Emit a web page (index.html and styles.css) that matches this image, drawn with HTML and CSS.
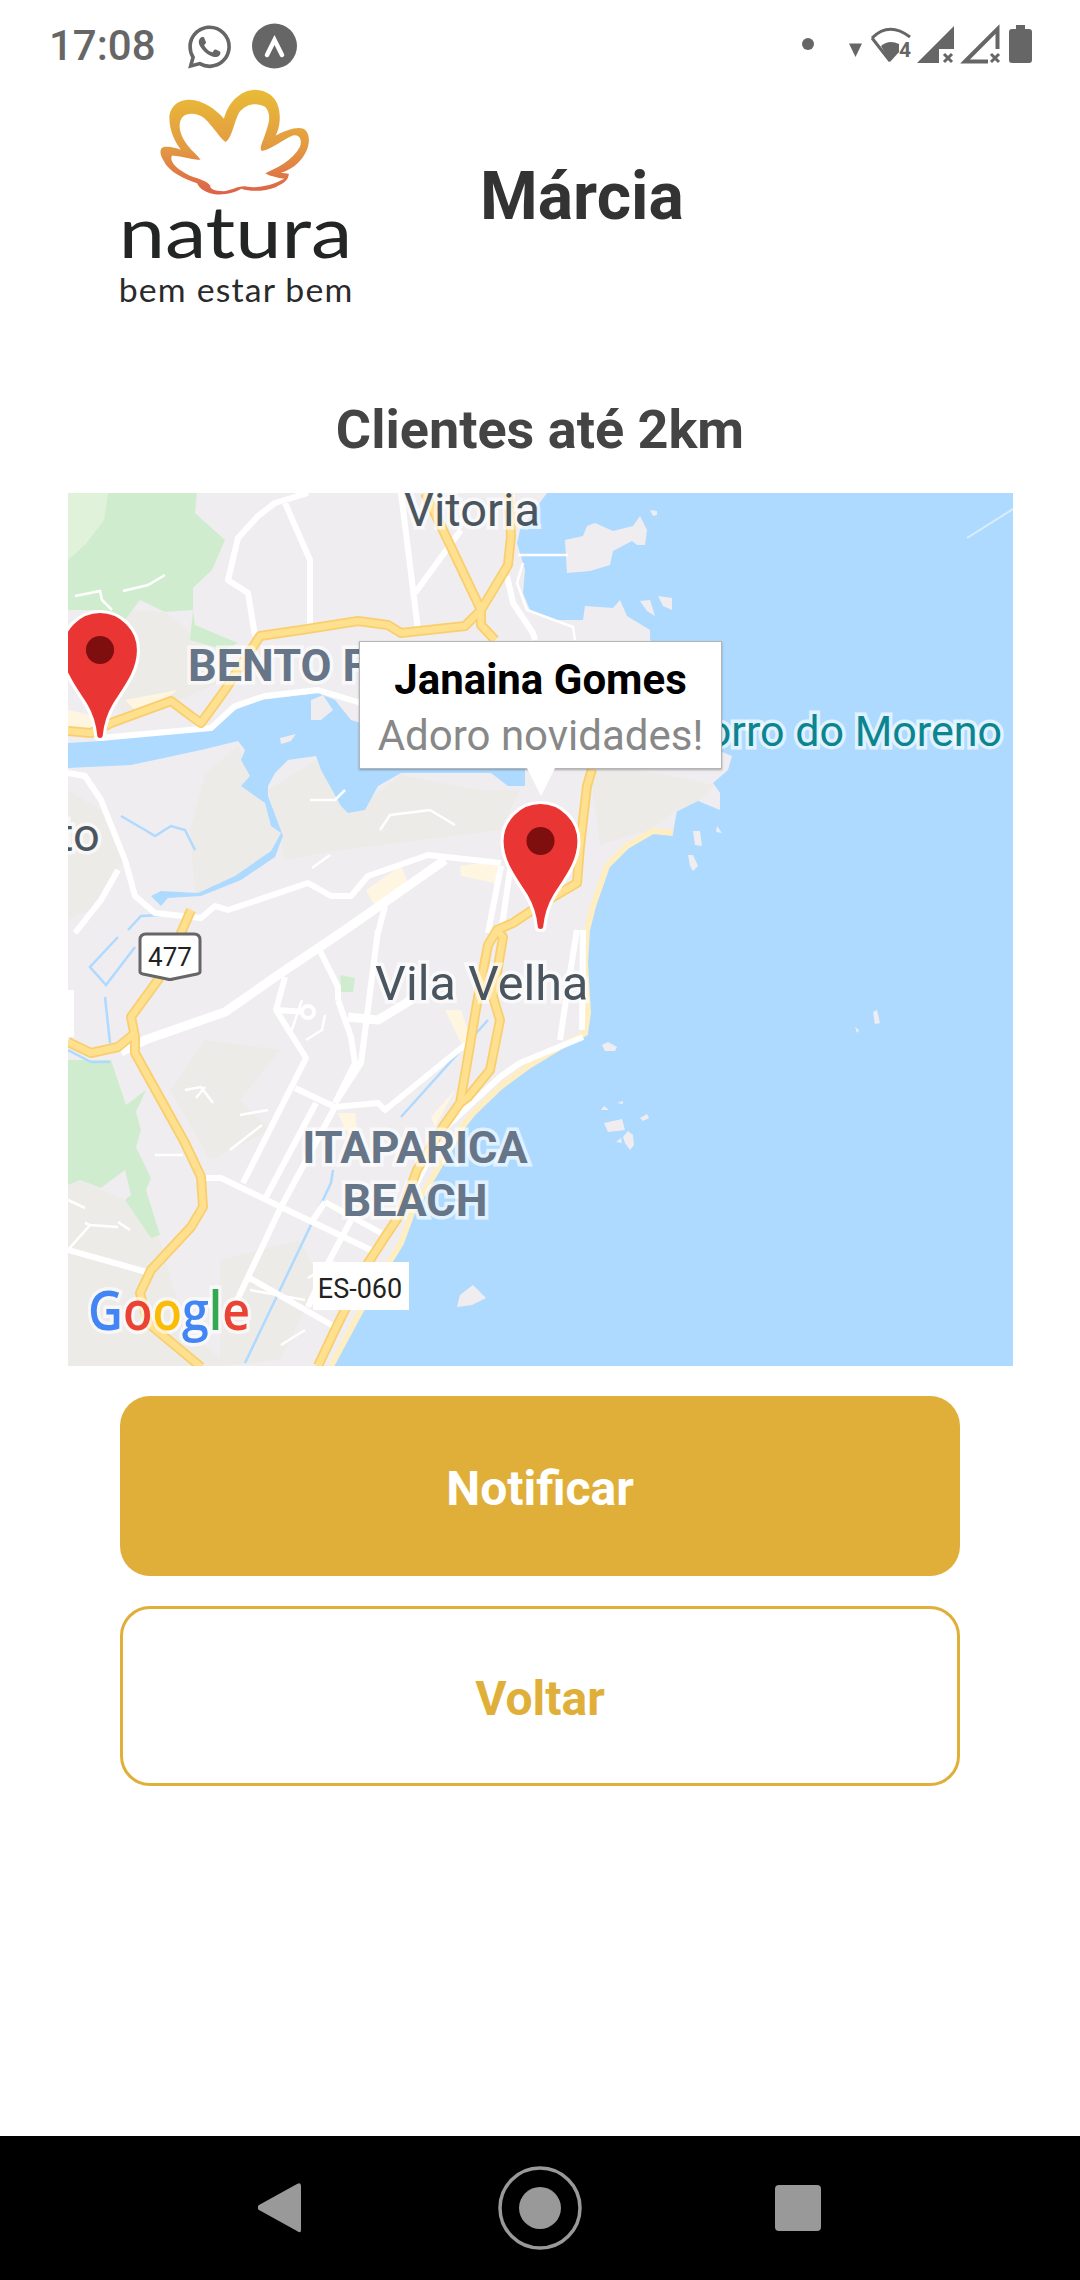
FILE: index.html
```html
<!DOCTYPE html>
<html lang="pt">
<head>
<meta charset="utf-8">
<title>Clientes até 2km</title>
<link rel="stylesheet" href="styles.css">
</head>
<body>
<div class="page">
  <div class="status">
    <span class="time">17:08</span>
    <svg class="wa" viewBox="0 0 24 24"><path class="sgrey" d="M17.472 14.382c-.297-.149-1.758-.867-2.03-.967-.273-.099-.471-.148-.67.15-.197.297-.767.966-.94 1.164-.173.199-.347.223-.644.075-.297-.15-1.255-.463-2.39-1.475-.883-.788-1.48-1.761-1.653-2.059-.173-.297-.018-.458.13-.606.134-.133.298-.347.446-.52.149-.174.198-.298.298-.497.099-.198.05-.371-.025-.52-.075-.149-.669-1.612-.916-2.207-.242-.579-.487-.5-.669-.51-.173-.008-.371-.01-.57-.01-.198 0-.52.074-.792.372-.272.297-1.04 1.016-1.04 2.479 0 1.462 1.065 2.875 1.213 3.074.149.198 2.096 3.2 5.077 4.487.709.306 1.262.489 1.694.625.712.227 1.36.195 1.871.118.571-.085 1.758-.719 2.006-1.413.248-.694.248-1.289.173-1.413-.074-.124-.272-.198-.57-.347m-5.421 7.403h-.004a9.87 9.87 0 01-5.031-1.378l-.361-.214-3.741.982.998-3.648-.235-.374a9.86 9.86 0 01-1.51-5.26c.001-5.45 4.436-9.884 9.888-9.884 2.64 0 5.122 1.03 6.988 2.898a9.825 9.825 0 012.893 6.994c-.003 5.45-4.437 9.884-9.885 9.884m8.413-18.297A11.815 11.815 0 0012.05 0C5.495 0 .16 5.335.157 11.892c0 2.096.547 4.142 1.588 5.945L.057 24l6.305-1.654a11.882 11.882 0 005.683 1.448h.005c6.554 0 11.89-5.335 11.893-11.893a11.821 11.821 0 00-3.48-8.413Z"/></svg>
    <svg class="expo" viewBox="252 23 45 46">
      <circle class="sgrey" cx="274.5" cy="46" r="22.5"/>
      <path class="caret" d="M267 55L274.500 40L282 55"/>
    </svg>
    <svg class="sysicons" viewBox="800 20 240 50">
      <circle class="sgrey" cx="808" cy="44" r="6"/>
      <path class="sgrey" d="M849 43.500H862L855.500 57Z"/>
      <path class="wifi-arc" d="M872 38Q889 21 910 37M872 38L890 61"/>
      <path class="sgrey" d="M881 46Q889 39 899 44V52L890 62Z"/>
      <text class="wifi4" x="899" y="57">4</text>
      <path class="sgrey" d="M917 63L954 26V63Z"/>
      <rect class="swhite" x="939" y="49" width="15" height="14"/>
      <path class="xmark" d="M944 54L952 62M952 54L944 62"/>
      <path class="sig-out" d="M965 61.500L997.500 29V61.500Z"/>
      <rect class="swhite" x="988" y="49" width="14" height="15"/>
      <path class="xmark" d="M991 54L999 62M999 54L991 62"/>
      <rect class="sgrey" x="1016" y="25" width="9" height="6"/>
      <rect class="sgrey" x="1009" y="29" width="23" height="34" rx="3"/>
    </svg>
  </div>

  <header class="header">
    <svg class="logo" viewBox="340 260 690 650" preserveAspectRatio="none">
      <defs>
        <linearGradient id="petal" x1="0" y1="0" x2="0" y2="1">
          <stop offset="0" stop-color="#E8BC36"/>
          <stop offset=".55" stop-color="#E39A42"/>
          <stop offset="1" stop-color="#DD6148"/>
        </linearGradient>
      </defs>
      <path class="flower" d="M650 355C665 300 700 270 740 268C785 270 812 300 812 350C812 375 806 395 800 405C830 390 860 378 880 385C900 395 902 430 885 460C870 490 840 510 815 517L838 520C838 540 820 550 800 560C770 572 730 575 700 565C680 578 640 588 610 578C595 572 580 565 572 548C535 535 490 515 475 480C463 460 463 445 475 440C490 437 510 442 525 448C505 420 490 385 492 345C497 315 520 298 550 298C590 300 625 325 650 355ZM655 425C640 415 620 380 595 355C575 338 545 335 530 350C515 370 520 400 545 435C560 455 575 465 582 478C560 478 530 468 500 465C490 480 510 505 550 525C575 535 600 540 610 555C610 565 620 572 650 572C675 570 690 555 715 558C745 565 790 555 825 535C800 530 780 525 770 518C800 505 850 480 870 440C878 420 870 400 850 405C825 415 790 445 760 452C755 445 755 440 765 415C780 370 790 345 770 320C745 305 715 310 695 335C680 360 675 410 655 425Z"/>
      <text class="natura" x="345" y="772" textLength="677" lengthAdjust="spacingAndGlyphs">natura</text>
      <text class="tagline" x="345" y="903" textLength="677" lengthAdjust="spacing">bem estar bem</text>
    </svg>
    <h1 class="name">Márcia</h1>
  </header>

  <h2 class="subtitle">Clientes até 2km</h2>

  <div class="map">
    <svg class="mapsvg" viewBox="68 493 945 873">
      <defs>
        <g id="hw">
          <path d="M68 731L91 733L111 723L171 701L191 716L201 723L225 690L260 636L301 630L358 621L388 625L401 633L465 626L481 610L508 565L511 536L508 493"/>
          <path d="M425 493L441 526L481 610L481 625L495 640"/>
          <path d="M592 769L587 786L580 846L577 883L543 903L513 923L497 930L488 945L477 1003L467 1063L460 1103L443 1127L417 1170L401 1213L385 1237L368 1263L335 1330L318 1366"/>
          <path d="M497 930L503 937L493 997L500 1020L490 1070L468 1097L460 1103"/>
          <path d="M191 910L181 933L158 980L131 1017L135 1037L135 1053L185 1143L201 1177L203 1207L191 1227L151 1270L140 1293L148 1323L201 1367"/>
          <path d="M68 1042L91 1053L118 1047L135 1033"/>
        </g>
      </defs>
      <rect class="water" x="68" y="493" width="945" height="873"/>
      <path class="land" d="M68 493L547 493L520 530L517 543L525 570L523 593L530 610L553 620L583 620L585 606L613 608L620 600L627 616L650 630L650 640L700 700L722 752L732 756L728 770L713 783L720 793L720 810L703 803L687 796L677 810L673 833L653 831L627 846L607 866L593 906L587 930L585 963L588 1013L585 1033L560 1047L527 1067L500 1087L473 1113L460 1130L437 1170L413 1210L401 1243L368 1297L331 1366L68 1366Z"/>
      <path class="land" d="M565 540L583 536L587 526L595 523L613 531L633 526L640 516L647 530L645 545L637 545L632 541L613 551L610 565L590 571L567 573Z"/>
      <path class="land" d="M650 510L657 511L657 515L653 516ZM640 601L650 600L655 616L647 611ZM658 596L672 598L672 610L663 606ZM693 831L700 831L702 846L695 845ZM717 826L722 833L716 832ZM688 855L693 855L698 866L693 871L690 866ZM602 1045L608 1042L617 1047L615 1051L605 1051ZM601 1110L604 1106L609 1110ZM617 1103L623 1101L623 1104ZM640 1118L647 1114L649 1118L643 1121ZM604 1123L622 1119L625 1130L608 1132ZM623 1137L628 1131L633 1135L634 1145L630 1150L625 1143ZM616 1142L621 1138L622 1143ZM873 1012L877 1010L880 1023L875 1024ZM855 1027L859 1030L857 1033ZM457 1307L460 1295L473 1285L486 1298L472 1305Z"/>
      <path class="seaLine" d="M967 538L1013 509"/>

      <path class="terrain" d="M268 790L316 760L350 815L400 775L480 790L520 790L500 830L340 850L285 860Z"/>
      <path class="terrain" d="M205 775L238 745L262 800L280 835L270 860L230 880L195 895L190 830Z"/>
      <path class="terrain" d="M590 770L640 770L715 785L700 800L670 815L650 830L600 845Z"/>
      <path class="terrain" d="M68 1185L80 1180L125 1200L160 1240L185 1330L230 1366L68 1366Z"/>
      <path class="terrain" d="M205 1040L280 1050L240 1100L270 1130L210 1160L170 1090Z"/>
      <path class="terrain" d="M125 610L165 612L200 640L225 680L180 700L125 720L100 650Z"/>
      <path class="terrain" d="M68 790L100 810L125 860L90 910L68 920Z"/>
      <path class="terrain" d="M220 1260L300 1240L320 1280L280 1360L220 1366Z"/>

      <path class="park" d="M68 493L197 493L195 513L225 540L212 570L193 588L193 610L165 612L140 600L125 620L100 610L68 610Z"/>
      <path class="park-light" d="M68 493L108 493L104 520L85 545L68 560Z"/>
      <path class="park" d="M193 610L195 625L238 643L225 650L190 640Z"/>
      <path class="park" d="M68 1060L111 1060L126 1105L146 1090L136 1112L141 1130L136 1147L151 1178L146 1190L160 1235L151 1238L125 1200L131 1195L125 1170L101 1188L80 1180L68 1185Z"/>
      <path class="park" d="M340 975L355 978L353 992L341 992Z"/>

      <path class="water" d="M68 743L101 741L168 730L211 731L235 710L261 700L318 693L335 700L351 720L361 723L430 700L525 720L525 786L508 786L491 773L401 773L378 786L365 810L348 813L341 806L321 770L316 756L288 760L275 773L268 786L268 796L283 836L275 857L241 880L201 896L168 898L161 906L151 896L161 891L198 893L235 876L271 851L281 833L271 826L265 803L241 786L250 776L241 760L245 750L238 741L201 750L131 765L68 768Z"/>
      <path class="land" d="M311 700L323 695L333 710L321 720L311 720ZM280 738L296 734L291 741L281 744Z"/>
      <path class="streamline" d="M121 816L145 830L155 836L171 826L185 830L195 850M128 930L141 916L163 915M118 937L90 967L106 985L135 947M105 997L110 1043M488 1020L401 1117M333 1170L331 1183L245 1363M68 1050L91 1062L110 1062"/>

      <path class="cream" d="M445 1010L461 1010L471 1040L461 1043ZM431 1117L455 1090L435 1127ZM338 1113L355 1113L358 1137L345 1130ZM366 890L401 866L408 883L375 906ZM460 866L501 860L495 883L461 876ZM68 710L90 715L95 730L68 728ZM125 700L178 690L140 715Z"/>
      <path class="beach" d="M673 833L653 831L627 846L607 866L593 906L587 930L585 963L588 1013L585 1033L560 1047L527 1067L500 1087L473 1113L460 1130L437 1170L413 1210L401 1243L368 1297L331 1366"/>

      <g class="road">
        <path d="M308 493L275 503L258 516L238 538L228 580L248 593L255 636M285 503L310 560L310 626M401 493L418 630M461 530L415 593"/>
        <path d="M100 738L211 728L235 706L265 696L318 690L338 696L361 703"/>
        <path d="M507 576L513 603L533 633L535 640"/>
        <path d="M68 773L85 776L101 800L125 860L135 896L155 913L201 918L215 906L228 910L308 883L331 896L351 896L368 876L428 855L501 863M118 870L101 900L75 933"/>
        <path d="M501 866L488 933M511 863L501 933M385 906L378 933"/>
        <path d="M338 1000L351 1037L355 1063L335 1103M378 930L361 1063L335 1103M285 977L276 1010L306 1058L243 1183M295 1088L335 1107L378 1103L385 1110L471 1040M316 1103L266 1197M205 1178L221 1178L281 1207L375 1252M335 1107L281 1207L231 1313M68 1250L150 1273M248 1277L335 1327M325 1202L311 1223M325 1202L381 1233M351 1220L328 1263L308 1307M318 947L338 987L338 1000"/>
        <path d="M577 930L570 973L560 1040M583 930L582 1030M500 1077L520 1063L583 1037M500 1077L443 1130L400 1217"/>
        <path d="M276 1010L308 1012"/>
        <circle class="rb" cx="308" cy="1012" r="6"/>
      </g>
      <path class="road-thick" d="M445 860L345 930L281 973L225 1012L145 1040L121 1052M348 1017L378 1020L411 1000"/>
      <path class="road-thin" d="M75 596L100 591L102 600L112 610M123 591L148 585L165 575M518 555L568 555M523 563L517 583L527 610L573 627L575 640M185 1090L201 1087L213 1103M196 1098L205 1087M68 1200L85 1208M85 1223L90 1225L68 1250M90 1225L118 1227M118 1222L130 1230M155 1155L183 1155M230 1150L262 1125M240 1115L268 1110M290 1035L302 1000M306 1040L322 1030L325 1015M308 1278L335 1262M250 1290L305 1300M281 1345L305 1330M312 868L330 855M310 800L335 800L345 790M380 830L390 815L430 810L455 825"/>
      <use href="#hw" class="hw-out"/>
      <use href="#hw" class="hw-in"/>

      <rect class="whitebox" x="68" y="990" width="6" height="47"/>

      <text class="lbl lbl-city" x="404" y="526">Vitoria</text>
      <text class="lbl lbl-city" x="58" y="851">to</text>
      <text class="lbl lbl-city lbl-big" x="375" y="1000">Vila Velha</text>
      <text class="lbl lbl-hood" x="188" y="681">BENTO F</text>
      <text class="lbl lbl-hood lbl-mid" x="415" y="1163">ITAPARICA</text>
      <text class="lbl lbl-hood lbl-mid" x="415" y="1216">BEACH</text>
      <text class="lbl lbl-poi" x="1002" y="746">Morro do Moreno</text>

      <path class="shield" d="M146 934H194Q200 934 200 940V972Q200 973 197 974L173 979Q170 980 167 979L143 974Q140 973 140 972V940Q140 934 146 934Z"/>
      <text class="shield-text" x="170" y="966">477</text>
      <rect class="whitebox" x="313" y="1262" width="96" height="48"/>
      <text class="es" x="360" y="1298">ES-060</text>

      <text class="google" x="88" y="1330" textLength="162" lengthAdjust="spacingAndGlyphs"><tspan class="g-b">G</tspan><tspan class="g-r">o</tspan><tspan class="g-y">o</tspan><tspan class="g-b">g</tspan><tspan class="g-g">l</tspan><tspan class="g-r">e</tspan></text>

      <g transform="translate(100 650) scale(1.040)">
        <path class="pin" d="M0-37C20-37 37-20 37 0C37 20 25 35 14 52C8 62 5 72 4 83C3.800 87-3.800 87-4 83C-5 72-8 62-14 52C-25 35-37 20-37 0C-37-20-20-37 0-37Z"/>
        <circle class="pin-dot" r="13.500"/>
      </g>
      <g transform="translate(540.500 841) scale(1.040)">
        <path class="pin" d="M0-37C20-37 37-20 37 0C37 20 25 35 14 52C8 62 5 72 4 83C3.800 87-3.800 87-4 83C-5 72-8 62-14 52C-25 35-37 20-37 0C-37-20-20-37 0-37Z"/>
        <circle class="pin-dot" r="13.500"/>
      </g>
    </svg>
    <div class="tip">
      <strong class="tip-title">Janaina Gomes</strong>
      <span class="tip-sub">Adoro novidades!</span>
    </div>
  </div>

  <div class="actions">
    <button class="btn btn-fill">Notificar</button>
    <button class="btn btn-line">Voltar</button>
  </div>

  <nav class="navbar">
    <svg class="nav-back" viewBox="258 2183 44 50"><path class="nav-shape" d="M259 2205L297 2184Q301 2182 301 2186V2230Q301 2234 297 2231L259 2210Q256 2208 259 2205Z"/></svg>
    <svg class="nav-home" viewBox="498 2166 84 84"><circle class="nav-ring" cx="540" cy="2208" r="40"/><circle class="nav-shape" cx="540" cy="2208" r="21"/></svg>
    <span class="nav-recent"></span>
  </nav>
</div>
</body>
</html>
```
FILE: styles.css
```css
* { box-sizing: border-box; }
html, body { margin: 0; padding: 0; background: #fff; overflow: hidden; }
body { font-family: Roboto, "Liberation Sans", sans-serif; }
.page { width: 1080px; height: 2280px; display: flex; flex-direction: column; background: #fff; }

/* status bar */
.status { height: 84px; flex: none; display: flex; align-items: flex-start; padding: 20px 40px 0 49px; }
.time { font-size: 42px; font-weight: 500; line-height: 50px; margin-top: 1px; color: #666; width: 104px; margin-right: 35px; }
.wa { width: 43px; height: 44px; margin: 5px 21px 0 0; }
.expo { width: 45px; height: 46px; margin-top: 3px; }
.sysicons { width: 240px; height: 50px; margin-left: auto; }
.sgrey { fill: #666; }
.swhite { fill: #fff; }
.caret { fill: none; stroke: #fff; stroke-width: 4.500; stroke-linecap: round; stroke-linejoin: miter; }
.wifi-arc { fill: none; stroke: #666; stroke-width: 3; }
.wifi4 { font-size: 21px; font-weight: 700; fill: #666; }
.xmark { fill: none; stroke: #666; stroke-width: 3; }
.sig-out { fill: none; stroke: #666; stroke-width: 4; }

/* header */
.header { height: 230px; flex: none; display: flex; align-items: flex-start; padding: 3px 0 0 117px; }
.logo { width: 238px; height: 217px; flex: none; }
.flower { fill: url(#petal); fill-rule: evenodd; }
.natura { font-family: Lato, sans-serif; font-size: 214px; fill: #222523; }
.tagline { font-family: Lato, sans-serif; font-size: 98px; fill: #2a2a2a; }
.name { margin: 72px 0 0 125px; font-size: 66px; line-height: 75px; font-weight: 700; color: #333; }

.subtitle { margin: 86px 0 33px; height: 60px; text-align: center; font-size: 54px; line-height: 60px; font-weight: 700; color: #444; }

/* map */
.map { position: relative; width: 945px; height: 873px; margin-left: 68px; flex: none; }
.mapsvg { display: block; width: 945px; height: 873px; }
.water { fill: #aedaff; }
.land { fill: #f0edf0; }
.terrain { fill: #edebe8; }
.park { fill: #cfedce; }
.park-light { fill: #e0f3da; }
.cream { fill: #fff6e2; }
.seaLine { fill: none; stroke: #d9edfb; stroke-width: 2; }
.streamline { fill: none; stroke: #aedaff; stroke-width: 2.500; }
.beach { fill: none; stroke: #ffeec2; stroke-width: 6; }
.road { fill: none; stroke: #fff; stroke-width: 6; stroke-linejoin: round; }
.rb { fill: #f0edf0; stroke-width: 4; }
.road-thick { fill: none; stroke: #fff; stroke-width: 9; stroke-linejoin: round; }
.road-thin { fill: none; stroke: #fff; stroke-width: 2.500; }
.hw-out { fill: none; stroke: #f9cf6e; stroke-width: 10; stroke-linejoin: round; }
.hw-in { fill: none; stroke: #fee08f; stroke-width: 6.500; stroke-linejoin: round; }
.whitebox { fill: #fff; }

.lbl { paint-order: stroke; stroke: rgba(255,255,255,.65); stroke-width: 7px; stroke-linejoin: miter; }
.lbl-city { font-size: 47px; fill: #4a5560; }
.lbl-big { font-size: 48.500px; }
.lbl-hood { font-size: 45px; font-weight: 700; fill: #667587; }
.lbl-mid { text-anchor: middle; }
.lbl-poi { font-size: 43px; fill: #0b8590; text-anchor: end; }
.shield { fill: #fff; stroke: #666; stroke-width: 3; }
.shield-text { font-size: 26px; fill: #222; text-anchor: middle; }
.es { font-size: 27px; fill: #222; text-anchor: middle; }
.google { font-family: "Open Sans", sans-serif; font-size: 54px; font-weight: 600; paint-order: stroke; stroke: rgba(255,255,255,.6); stroke-width: 7px; }
.g-b { fill: #4285f4; }
.g-r { fill: #ea4335; }
.g-y { fill: #fbbc05; }
.g-g { fill: #34a853; }
.pin { fill: #ea3535; stroke: #fff; stroke-width: 3; }
.pin-dot { fill: #7f0f0f; }

/* callout */
.tip { position: absolute; left: 291px; top: 148px; width: 363px; height: 128px; background: #fff; border: 1px solid #b5b5b5; box-shadow: 0 1px 2px rgba(0,0,0,.3); display: flex; flex-direction: column; align-items: center; }
.tip::after { content: ""; position: absolute; left: 167px; top: 126px; width: 28px; height: 28px; background: linear-gradient(#fff, #fff); clip-path: polygon(0 0, 100% 0, 50% 100%); }
.tip-title { font-size: 42px; line-height: 50px; margin-top: 13px; color: #000; font-weight: 700; }
.tip-sub { font-size: 42px; line-height: 50px; margin-top: 6px; color: #888; }

/* actions */
.actions { flex: none; display: flex; flex-direction: column; gap: 30px; margin: 30px 0 0 120px; width: 840px; }
.btn { width: 100%; height: 180px; padding: 5px 0 0; border-radius: 30px; font-family: inherit; font-size: 48px; font-weight: 700; }
.btn-fill { background: #e0af3a; border: 0; color: #fff; }
.btn-line { background: #fff; border: 3px solid #e0af3a; color: #e0af3a; }

/* nav */
.navbar { margin-top: auto; height: 144px; flex: none; background: #000; position: relative; display: flex; align-items: center; padding: 0 0 0 258px; }
.nav-back { width: 44px; height: 50px; margin-top: -1px; }
.nav-home { width: 84px; height: 84px; margin-left: 196px; }
.nav-recent { width: 46px; height: 46px; margin-left: 193px; background: #999; border-radius: 4px; }
.nav-shape { fill: #999; }
.nav-ring { fill: none; stroke: #999; stroke-width: 3.500; }
```
